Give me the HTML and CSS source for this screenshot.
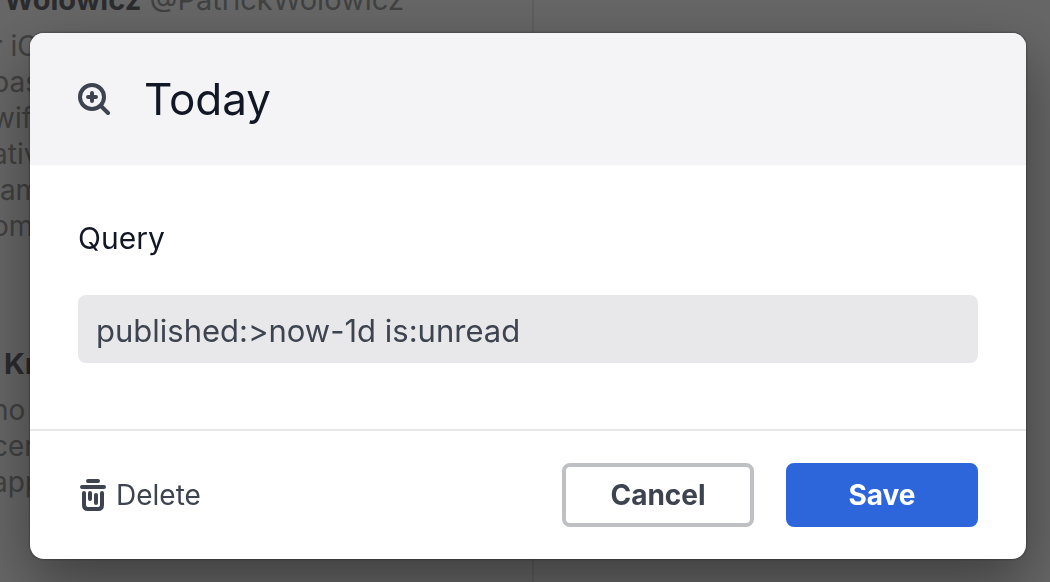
FILE: index.html
```
<!DOCTYPE html>
<html lang="en">
<head>
  <meta charset="UTF-8">
  <meta name="viewport" content="width=device-width, initial-scale=1">
  <title>Today</title>
  <link rel="stylesheet" href="styles.css">
</head>
<body>
  <main class="timeline">
    <div class="column">
      <article class="post">
        <div class="author"><b>Wolowicz</b> @PatrickWolowicz</div>
        <div class="text">r iO
bas
wif
ativ
 am
om</div>
      </article>
      <article class="post">
        <div class="author"><b>Kr</b></div>
        <div class="text">no
cer
app</div>
      </article>
    </div>
    <div class="column"></div>
  </main>

  <div class="overlay">
    <form class="modal" role="dialog" aria-labelledby="modalTitle">
      <header class="modal-header">
        <svg class="icon-search" viewBox="0 0 32 32" fill="none" stroke="currentColor" stroke-width="4" stroke-linecap="round">
          <circle cx="14" cy="14" r="12"/>
          <path d="M23 23l7 7M14 10v8M10 14h8"/>
        </svg>
        <h1 class="modal-title" id="modalTitle">Today</h1>
      </header>

      <div class="modal-body">
        <label class="label" for="query">Query</label>
        <input class="query" id="query" type="text" value="published:&gt;now-1d is:unread" spellcheck="false">
      </div>

      <footer class="modal-footer">
        <button class="delete-btn" type="button">
          <svg class="icon-trash" viewBox="0 0 26 32" fill="none" stroke="currentColor" stroke-width="4" stroke-linecap="round">
            <path d="M8 2h10M2 8h22"/>
            <path d="M4 14v12q0 4 4 4h10q4 0 4-4V14"/>
            <path d="M10 14v6M16 16v8"/>
          </svg>
          Delete
        </button>
        <div class="actions">
          <button class="btn btn-cancel" type="button">Cancel</button>
          <button class="btn btn-save" type="submit">Save</button>
        </div>
      </footer>
    </form>
  </div>
</body>
</html>
```

FILE: styles.css
```
* {
  box-sizing: border-box;
}

body {
  margin: 0;
  min-height: 100vh;
  overflow: hidden;
  font-family: Inter, "Liberation Sans", sans-serif;
  background: #fff;
  color: #3d4450;
}

/* page behind the modal */
.timeline {
  display: flex;
  height: 100vh;
  overflow: hidden;
  font-size: 28px;
  line-height: 36px;
  color: #a0a1a3;
}

.column {
  flex: 1;
}

.column:first-child {
  border-right: 2px solid #eaeaea;
  margin-right: -16px;
}

.post {
  margin-top: -18px;
  margin-bottom: 120px;
}

.author {
  padding-left: 4px;
  margin-bottom: 10px;
  font-size: 29px;
}

.author b {
  color: #6b6c72;
}

.text {
  margin-left: -8px;
  white-space: pre;
}

.overlay {
  position: fixed;
  inset: 0;
  padding: 33px 24px 23px 30px;
  background: rgba(0, 0, 0, 0.6);
}

.modal {
  background: #fff;
  border-radius: 14px;
  overflow: hidden;
  box-shadow: 0 0 2px 1px rgba(0, 0, 0, 0.25), 0 24px 60px rgba(0, 0, 0, 0.4);
}

.modal-header {
  display: flex;
  align-items: center;
  gap: 34px;
  padding: 36px 48px;
  background: #f4f4f7;
}

.icon-search {
  width: 32px;
  height: 32px;
}

.modal-title {
  margin: 0;
  font-size: 44px;
  font-weight: 400;
  line-height: 60px;
  color: #111724;
}

.modal-body {
  padding: 48px 48px 66px;
}

.label {
  display: block;
  margin-bottom: 32px;
  font-size: 30px;
  line-height: 50px;
  color: #111724;
}

.query {
  display: block;
  width: 100%;
  height: 68px;
  padding: 2px 18px 0;
  border: none;
  border-radius: 8px;
  background: #e8e8ea;
  font: inherit;
  font-size: 31px;
  color: #3d4450;
}

.modal-footer {
  display: flex;
  align-items: center;
  justify-content: space-between;
  padding: 32px 48px;
  border-top: 2px solid #e8e8ea;
}

.delete-btn {
  display: flex;
  align-items: center;
  gap: 10px;
  padding: 0 2px;
  border: none;
  background: none;
  font: inherit;
  font-size: 28px;
  color: #3d4450;
  cursor: pointer;
}

.icon-trash {
  width: 26px;
  height: 32px;
}

.actions {
  display: flex;
  gap: 32px;
}

.btn {
  width: 192px;
  height: 64px;
  border: 4px solid #bfc0c4;
  border-radius: 8px;
  background: #fff;
  font: inherit;
  font-size: 28px;
  font-weight: 700;
  color: #3d4450;
  cursor: pointer;
}

.btn-save {
  border-color: #2d66da;
  background: #2d66da;
  color: #fff;
}
```
